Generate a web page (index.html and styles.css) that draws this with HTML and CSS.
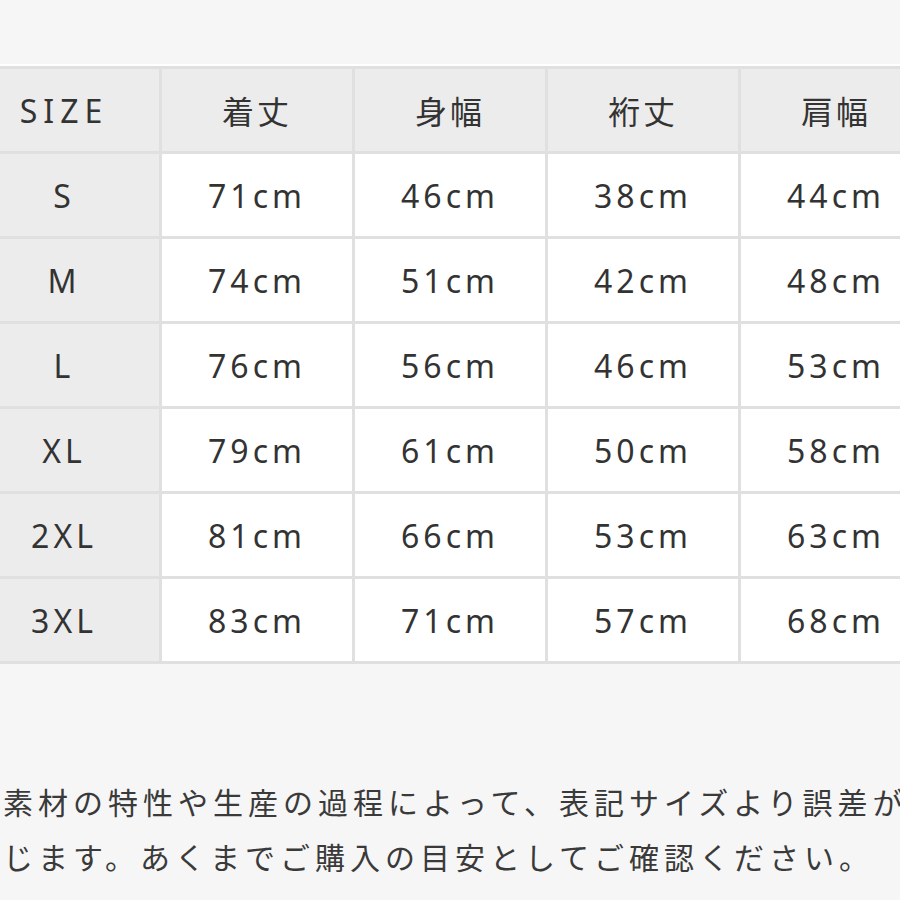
FILE: index.html
```html
<!DOCTYPE html>
<html lang="ja">
<head>
<meta charset="utf-8">
<title>サイズ表</title>
<link rel="stylesheet" href="styles.css">
</head>
<body>
<main class="page">
  <div class="table-wrap">
    <table class="size-table">
      <thead>
        <tr><th class="size-col">SIZE</th><th>着丈</th><th>身幅</th><th>裄丈</th><th>肩幅</th></tr>
      </thead>
      <tbody>
        <tr><th class="size-col">S</th><td>71cm</td><td>46cm</td><td>38cm</td><td>44cm</td></tr>
        <tr><th class="size-col">M</th><td>74cm</td><td>51cm</td><td>42cm</td><td>48cm</td></tr>
        <tr><th class="size-col">L</th><td>76cm</td><td>56cm</td><td>46cm</td><td>53cm</td></tr>
        <tr><th class="size-col">XL</th><td>79cm</td><td>61cm</td><td>50cm</td><td>58cm</td></tr>
        <tr><th class="size-col">2XL</th><td>81cm</td><td>66cm</td><td>53cm</td><td>63cm</td></tr>
        <tr><th class="size-col">3XL</th><td>83cm</td><td>71cm</td><td>57cm</td><td>68cm</td></tr>
      </tbody>
    </table>
  </div>
  <p class="note">素材の特性や生産の過程によって、表記サイズより誤差が生<br>じます。あくまでご購入の目安としてご確認ください。</p>
</main>
</body>
</html>
```

FILE: styles.css
```css
html, body {
  margin: 0;
  padding: 0;
  background: #f6f6f6;
  overflow: hidden;
}

.page {
  width: 900px;
  height: 900px;
  overflow: hidden;
  padding-top: 64px;
  box-sizing: border-box;
  color: #363636;
}

.table-wrap {
  border-top: 2px solid #ffffff;
}

.size-table {
  margin-left: -34px;
  border-collapse: separate;
  border-spacing: 3px;
  background: #e0e0e0;
  table-layout: fixed;
  width: 968px;
  font-family: "Noto Sans", "Noto Sans CJK JP", sans-serif;
  font-size: 32px;
  letter-spacing: 4px;
  color: #333333;
}

.size-table th,
.size-table td {
  width: 190px;
  height: 82px;
  padding: 0;
  text-align: center;
  vertical-align: middle;
  font-weight: 400;
  background: #ffffff;
}

.size-table thead th {
  background: #ececec;
  letter-spacing: 3px;
}

.size-table .size-col {
  background: #ececec;
}

.size-table thead .size-col {
  letter-spacing: 6px;
}

.note {
  margin: 110px 0 0 3px;
  white-space: nowrap;
  font-family: "Noto Sans CJK JP", sans-serif;
  font-size: 30px;
  letter-spacing: 5px;
  line-height: 55px;
  color: #3a3a3a;
}
```
